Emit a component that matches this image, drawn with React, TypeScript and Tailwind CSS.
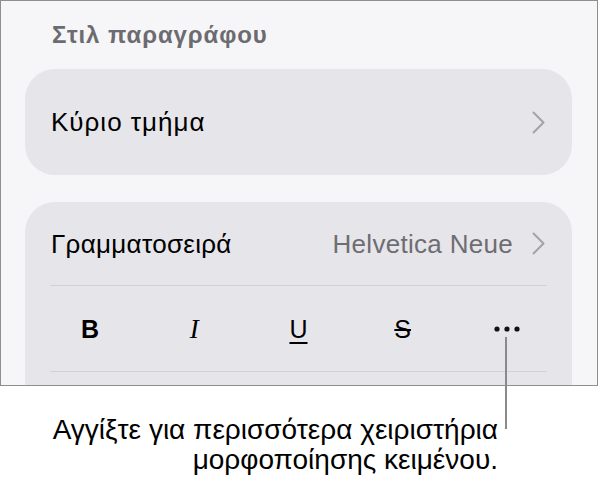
import React from "react";

function Chevron() {
  return (
    <svg width="13" height="23" viewBox="0 0 13 23" fill="none">
      <polyline
        points="1.5,1.5 11.5,11.5 1.5,21.5"
        stroke="#a3a3a8"
        strokeWidth="2"
        strokeLinecap="round"
        strokeLinejoin="round"
      />
    </svg>
  );
}

function Dots() {
  return (
    <svg width="28" height="6" viewBox="0 0 28 6">
      <circle cx="4" cy="3" r="2.6" fill="#111" />
      <circle cx="14" cy="3" r="2.6" fill="#111" />
      <circle cx="24" cy="3" r="2.6" fill="#111" />
    </svg>
  );
}

export default function App() {
  return (
    <div className="relative w-[599px] h-[481px] bg-white font-['Liberation_Sans',_Arial,_sans-serif] text-black">
      {/* panel */}
      <div className="w-[598px] h-[386px] border border-[#8e8e8e] bg-[#f6f6f8] overflow-hidden pl-[24px] pr-[25px]">
        <div className="pt-[20px] pl-[27px] text-[24px] leading-[28px] tracking-[0.9px] font-semibold text-[#6b6b70]">
          Στιλ παραγράφου
        </div>

        <div className="mt-[20px] h-[106px] rounded-[30px] bg-[#e6e5ea] flex items-center justify-between pl-[26px] pr-[27px]">
          <span className="text-[26px] leading-[30px] tracking-[1px]">Κύριο τμήμα</span>
          <Chevron />
        </div>

        <div className="mt-[27px] h-[260px] rounded-[30px] bg-[#e6e5ea]">
          <div className="h-[83px] flex items-center justify-between pl-[26px] pr-[27px]">
            <span className="text-[26px] leading-[30px] tracking-[0.3px]">Γραμματοσειρά</span>
            <div className="flex items-center gap-[19px]">
              <span className="text-[26px] leading-[30px] tracking-[0.3px] text-[#6d6d72]">Helvetica Neue</span>
              <Chevron />
            </div>
          </div>
          <div className="mx-[25px] h-px bg-[#d0d0d5]" />
          <div className="h-[85px] grid grid-cols-5 items-center px-[13px]">
            <div className="flex justify-center">
              <span className="text-[25px] leading-[30px] font-bold">B</span>
            </div>
            <div className="flex justify-center">
              <span className="text-[27px] leading-[30px] italic font-['Liberation_Serif',_serif]">I</span>
            </div>
            <div className="flex justify-center">
              <span className="text-[25px] leading-[30px] underline decoration-[2px] underline-offset-[4px]">U</span>
            </div>
            <div className="flex justify-center">
              <span className="text-[25px] leading-[30px] line-through decoration-[1.5px]">S</span>
            </div>
            <div className="flex justify-center">
              <Dots />
            </div>
          </div>
          <div className="mx-[25px] h-px bg-[#d0d0d5]" />
        </div>
      </div>

      {/* callout */}
      <div className="mt-[29px] pr-[101px] text-right text-[28px] leading-[30px]">
        <div>Αγγίξτε για περισσότερα χειριστήρια</div>
        <div>μορφοποίησης κειμένου.</div>
      </div>
      <div className="absolute left-[505px] top-[337px] w-[2px] h-[92px] bg-[#8a8a8a]" />
    </div>
  );
}
